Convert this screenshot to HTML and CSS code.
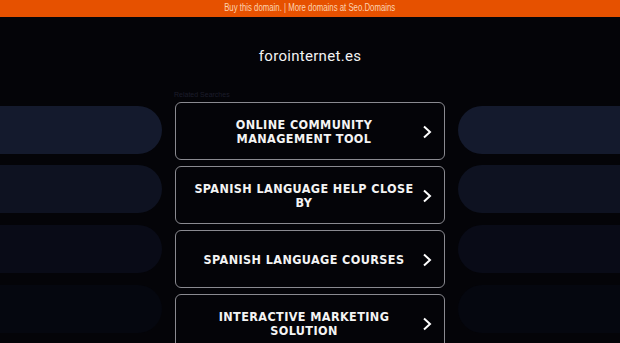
FILE: index.html
```html
<!DOCTYPE html>
<html>
<head>
<meta charset="utf-8">
<link rel="stylesheet" href="styles.css">
</head>
<body>
<div class="topbar"><span class="topbar-text">Buy this domain. | More domains at Seo.Domains</span></div>
<div class="title">forointernet.es</div>
<div class="stage">
  <div class="side left">
    <div class="pill p1"></div>
    <div class="pill p2"></div>
    <div class="pill p3"></div>
    <div class="pill p4"></div>
  </div>
  <div class="center">
    <div class="related">Related Searches</div>
    <a class="btn"><span class="label">ONLINE COMMUNITY MANAGEMENT TOOL</span><svg class="chev" viewBox="0 0 10 14"><path d="M2 1.5 L8 7 L2 12.5" fill="none" stroke="#fff" stroke-width="2"/></svg></a>
    <a class="btn"><span class="label">SPANISH LANGUAGE HELP CLOSE BY</span><svg class="chev" viewBox="0 0 10 14"><path d="M2 1.5 L8 7 L2 12.5" fill="none" stroke="#fff" stroke-width="2"/></svg></a>
    <a class="btn"><span class="label">SPANISH LANGUAGE COURSES</span><svg class="chev" viewBox="0 0 10 14"><path d="M2 1.5 L8 7 L2 12.5" fill="none" stroke="#fff" stroke-width="2"/></svg></a>
    <a class="btn"><span class="label">INTERACTIVE MARKETING SOLUTION</span><svg class="chev" viewBox="0 0 10 14"><path d="M2 1.5 L8 7 L2 12.5" fill="none" stroke="#fff" stroke-width="2"/></svg></a>
  </div>
  <div class="side right">
    <div class="pill p1"></div>
    <div class="pill p2"></div>
    <div class="pill p3"></div>
    <div class="pill p4"></div>
  </div>
</div>
</body>
</html>
```
FILE: styles.css
```css
html, body {
  margin: 0;
  padding: 0;
  background: #040408;
  overflow: hidden;
  height: 343px;
}
body {
  font-family: "Liberation Sans", Arial, sans-serif;
}
.topbar {
  height: 17px;
  line-height: 16px;
  background: #e65100;
  color: #fcd3b0;
  font-size: 10px;
  text-align: center;
  white-space: nowrap;
}
.topbar-text {
  display: inline-block;
  transform: scaleX(0.78);
}
.title {
  height: 75px;
  display: flex;
  align-items: center;
  justify-content: center;
  color: #f2f2f2;
  font-family: Roboto, "Liberation Sans", sans-serif;
  font-size: 15px;
  letter-spacing: 0.3px;
  padding-top: 2px;
  box-sizing: border-box;
}
.stage {
  display: flex;
  justify-content: space-between;
}
.side {
  width: 162px;
  display: flex;
  flex-direction: column;
  gap: 12px;
  padding-top: 14px;
}
.pill {
  height: 48px;
}
.left .pill { border-radius: 0 24px 24px 0; }
.right .pill { border-radius: 24px 0 0 24px; }
.pill.p1 { background: #141a2d; }
.pill.p2 { background: #0e1221; margin-top: -1px; }
.pill.p3 { background: #090b17; }
.pill.p4 { background: #05070f; }
.center {
  width: 270px;
  display: flex;
  flex-direction: column;
  gap: 6px;
}
.related {
  font-size: 7px;
  color: #1c1d2b;
  height: 7px;
  line-height: 7px;
  margin-top: -1px;
  margin-bottom: -2px;
  margin-left: -1px;
}
.btn {
  position: relative;
  height: 58px;
  box-sizing: border-box;
  border: 1px solid #8a8a90;
  border-radius: 6px;
  display: flex;
  align-items: center;
  justify-content: center;
  padding: 2px 26px 0 14px;
  color: #f4f4f4;
  font-family: "DejaVu Sans Condensed", "DejaVu Sans", Verdana, sans-serif;
  font-stretch: condensed;
  font-weight: bold;
  font-size: 12.5px;
  line-height: 14px;
  letter-spacing: 0.4px;
  text-align: center;
}
.label {
  display: block;
}
.chev {
  position: absolute;
  right: 12px;
  top: 50%;
  width: 10px;
  height: 14px;
  margin-top: -6px;
}
```
